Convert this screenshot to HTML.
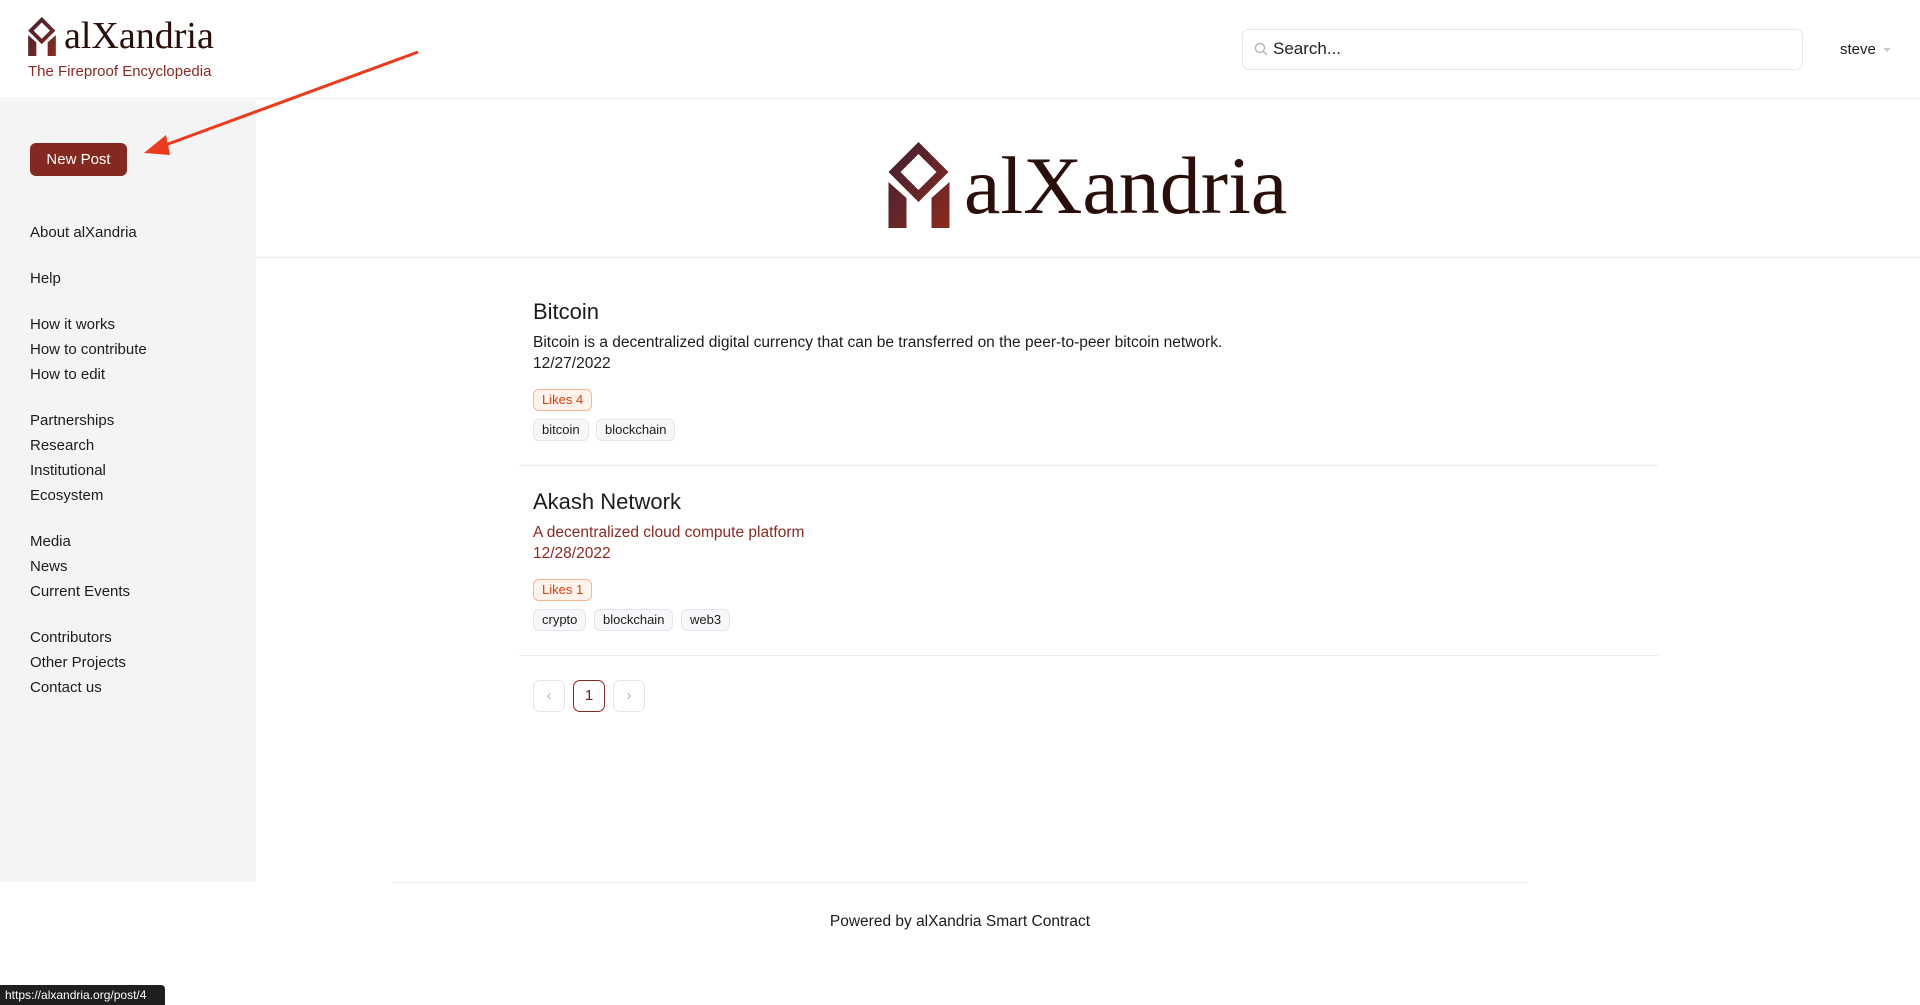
<!DOCTYPE html>
<html><head><meta charset="utf-8"><style>
*{box-sizing:border-box;margin:0;padding:0}
body{width:1920px;height:1005px;position:relative;background:#fff;font-family:"Liberation Sans",sans-serif;color:#1c1c1c;overflow:hidden}
.abs{position:absolute}
.hdr{left:0;top:0;width:1920px;height:99px;border-bottom:1px solid #ececec}
.side{left:0;top:100px;width:256px;height:782px;background:#f4f4f4}
.side a{position:absolute;left:30px;font-size:15px;color:#1c1c1c;text-decoration:none;line-height:18px}
.btn{left:30px;top:143px;width:97px;height:33px;background:#84291f;border-radius:6px;color:#fff;font-size:15px;text-align:center;line-height:33px}
.t{font-size:15.5px;line-height:20px}
.badge{height:22px;border-radius:6px;font-size:13px;line-height:20px;padding:0 8px}
.like{background:#fff3ec;border:1px solid #f8b590;color:#d9400f}
.tag{background:#f7f8fa;border:1px solid #e3e5ea;color:#1c1c1c}
.pg{width:32px;height:32px;border:1px solid #e3e5ee;border-radius:7px;text-align:center;line-height:30px;font-size:15px;color:#bbb}
</style></head><body>
<div class="abs hdr"></div>
<svg class="abs" style="left:28px;top:17px" width="28" height="39" viewBox="0 0 61 86">
<defs><linearGradient id="g" x1="0" y1="0" x2="1" y2="1"><stop offset="0" stop-color="#3e1f33"/><stop offset="1" stop-color="#8c2a1e"/></linearGradient></defs>
<path fill="url(#g)" fill-rule="evenodd" d="M30 0L60 30L30 60L0 30Z M30 12L48 30L30 48L12 30Z M0 40L18 56V86H0Z M61 40L43 56V86H61Z"/></svg>
<div class="abs" style="left:64px;top:14px;font-family:'Liberation Serif',serif;font-size:38px;color:#2a0e0a;line-height:44px">alXandria</div>
<div class="abs" style="left:28px;top:63px;font-size:15px;color:#8a2a22">The Fireproof Encyclopedia</div>
<div class="abs" style="left:1242px;top:29px;width:561px;height:41px;border:1px solid #e6e6ea;border-radius:7px"></div>
<svg class="abs" style="left:1254px;top:42px" width="14" height="14" viewBox="0 0 14 14"><circle cx="6" cy="6" r="4.5" fill="none" stroke="#aaa" stroke-width="1.2"/><path d="M9.3 9.3L13 13" stroke="#aaa" stroke-width="1.2"/></svg>
<div class="abs" style="left:1273px;top:39px;font-size:17px;color:#222">Search...</div>
<div class="abs" style="left:1840px;top:41px;font-size:15px">steve</div>
<div class="abs" style="left:1883px;top:48px;width:0;height:0;border-left:4px solid transparent;border-right:4px solid transparent;border-top:4px solid #ccc"></div>

<div class="abs side"></div>
<div class="abs btn">New Post</div>
<div class="side abs" style="background:none">
<a style="top:124px">About alXandria</a>
<a style="top:170px">Help</a>
<a style="top:216px">How it works</a>
<a style="top:241px">How to contribute</a>
<a style="top:266px">How to edit</a>
<a style="top:312px">Partnerships</a>
<a style="top:337px">Research</a>
<a style="top:362px">Institutional</a>
<a style="top:387px">Ecosystem</a>
<a style="top:433px">Media</a>
<a style="top:458px">News</a>
<a style="top:483px">Current Events</a>
<a style="top:529px">Contributors</a>
<a style="top:554px">Other Projects</a>
<a style="top:579px">Contact us</a>
</div>

<svg class="abs" style="left:888px;top:142px" width="62" height="86" viewBox="0 0 61 86">
<path fill="url(#g)" fill-rule="evenodd" d="M30 0L60 30L30 60L0 30Z M30 12L48 30L30 48L12 30Z M0 40L18 56V86H0Z M61 40L43 56V86H61Z"/></svg>
<div class="abs" style="left:964px;top:140px;font-family:'Liberation Serif',serif;font-size:82px;color:#2a0e0a;line-height:92px">alXandria</div>
<div class="abs" style="left:256px;top:257px;width:1664px;height:1px;background:#ececec"></div>

<div class="abs" style="left:533px;top:298px;font-size:22px;line-height:28px">Bitcoin</div>
<div class="abs t" style="left:533px;top:333px">Bitcoin is a decentralized digital currency that can be transferred on the peer-to-peer bitcoin network.</div>
<div class="abs t" style="left:533px;top:354px">12/27/2022</div>
<div class="abs badge like" style="left:533px;top:389px">Likes 4</div>
<div class="abs badge tag" style="left:533px;top:419px">bitcoin</div>
<div class="abs badge tag" style="left:596px;top:419px">blockchain</div>
<div class="abs" style="left:519px;top:465px;width:1139px;height:1px;background:#ececec"></div>

<div class="abs" style="left:533px;top:488px;font-size:22px;line-height:28px">Akash Network</div>
<div class="abs t" style="left:533px;top:523px;color:#8a2a22">A decentralized cloud compute platform</div>
<div class="abs t" style="left:533px;top:544px;color:#8a2a22">12/28/2022</div>
<div class="abs badge like" style="left:533px;top:579px">Likes 1</div>
<div class="abs badge tag" style="left:533px;top:609px">crypto</div>
<div class="abs badge tag" style="left:594px;top:609px">blockchain</div>
<div class="abs badge tag" style="left:681px;top:609px">web3</div>
<div class="abs" style="left:519px;top:655px;width:1139px;height:1px;background:#ececec"></div>

<div class="abs pg" style="left:533px;top:680px">&#8249;</div>
<div class="abs pg" style="left:573px;top:680px;border-color:#8a2a22;color:#6a2a22">1</div>
<div class="abs pg" style="left:613px;top:680px">&#8250;</div>

<div class="abs" style="left:392px;top:882px;width:1135px;height:1px;background:#ececec"></div>
<div class="abs t" style="left:0;width:1920px;text-align:center;top:912px">Powered by alXandria Smart Contract</div>

<svg class="abs" style="left:0;top:0" width="450" height="200"><path d="M418 52L160 147" stroke="#ee3a1c" stroke-width="3"/><path d="M144 153L166 135L170 155Z" fill="#ee3a1c"/></svg>
<div class="abs" style="left:0;top:985px;width:165px;height:20px;background:#1f1f1f;border-radius:0 4px 0 0;color:#fff;font-size:12px;line-height:20px;padding-left:5px">https://alxandria.org/post/4</div>
</body></html>
